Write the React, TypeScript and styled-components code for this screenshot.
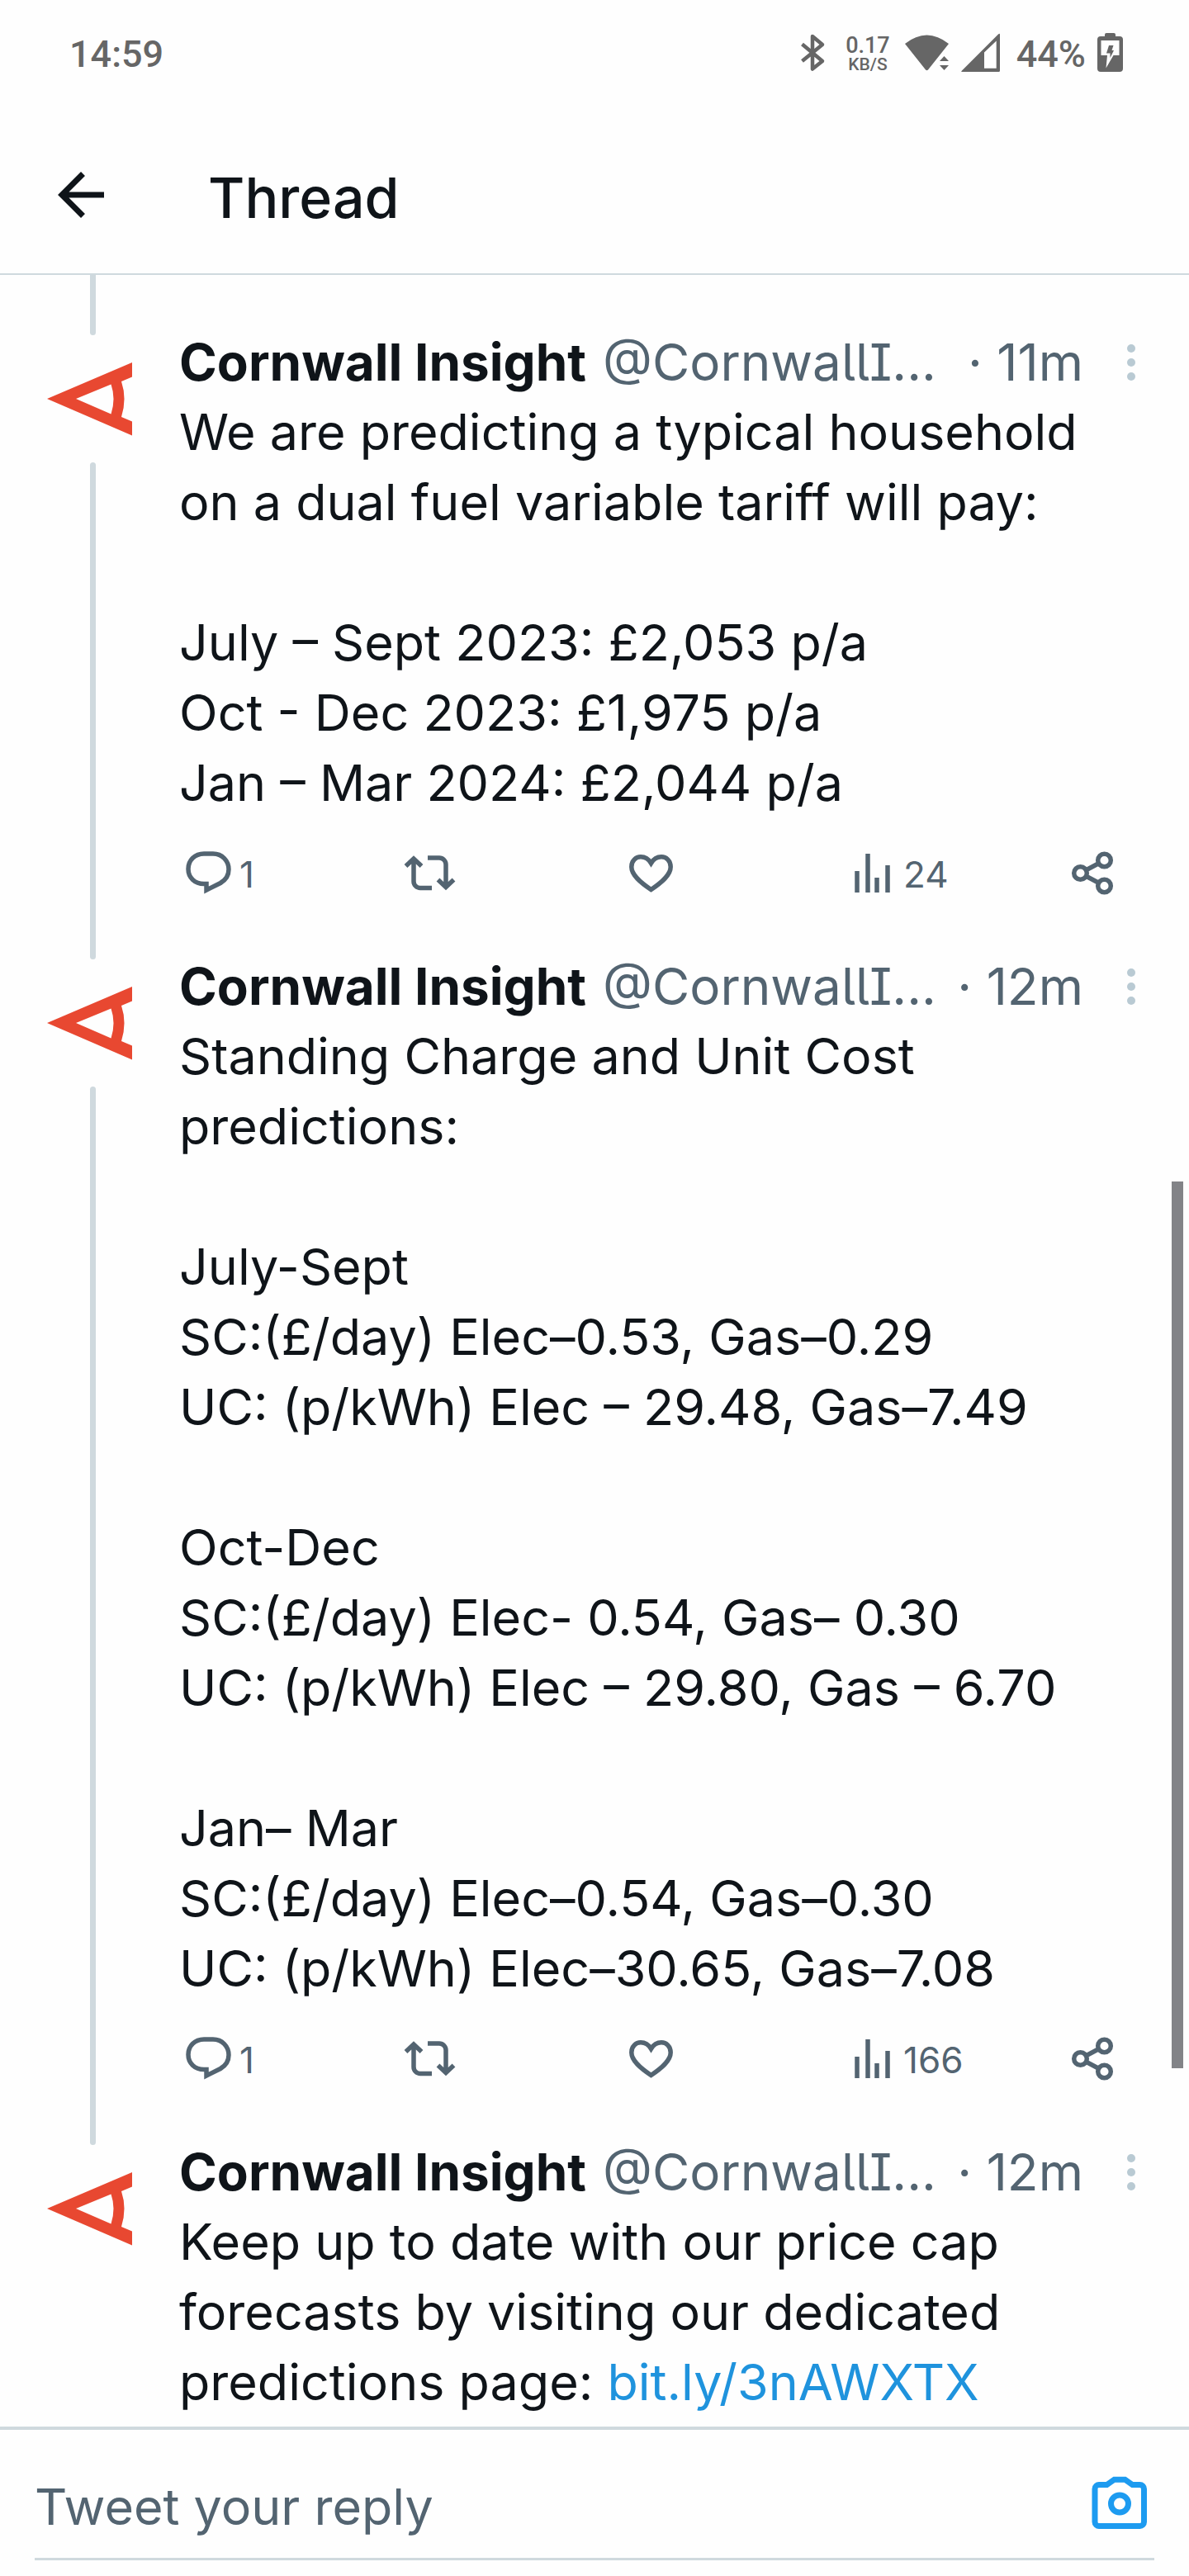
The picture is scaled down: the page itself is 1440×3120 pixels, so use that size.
import React from "react";
import styled, { createGlobalStyle } from "styled-components";

const ink = "#0f1419";
const muted = "#536471";
const line = "#cfd9de";
const status = "#666666";

const GlobalStyle = createGlobalStyle`
  * { box-sizing: border-box; }
  body {
    margin: 0;
    background: #fefefe;
    color: ${ink};
    font-family: Inter, "Noto Sans", sans-serif;
  }
  button, input { font: inherit; }
`;

const Screen = styled.div`
  display: flex;
  flex-direction: column;
  min-height: 100vh;
`;

const StatusBar = styled.div`
  display: flex;
  align-items: center;
  justify-content: space-between;
  height: 132px;
  padding: 0 80px 0 84px;
  color: ${status};
  font: 500 45px/52px Roboto, sans-serif;
`;

const StatusIcons = styled.div`
  display: flex;
  align-items: center;
`;

const StatusIcon = styled.svg<{ $gap: number }>`
  display: block;
  height: 52px;
  margin-left: ${(p) => p.$gap}px;
  fill: currentColor;
  overflow: visible;
`;

const Speed = styled.div`
  display: flex;
  flex-direction: column;
  align-items: center;
  margin-left: 26px;
  font-size: 27px;
  line-height: 24px;
`;

const SpeedUnit = styled.span`
  font-size: 21px;
  line-height: 22px;
`;

const BatteryLevel = styled.span`
  margin-left: 20px;
`;

const TopBar = styled.header`
  display: flex;
  align-items: center;
  gap: 124px;
  height: 201px;
  padding: 8px 68px 0;
  border-bottom: 2px solid ${line};
`;

const IconButton = styled.button`
  display: flex;
  flex: none;
  align-items: center;
  justify-content: center;
  padding: 0;
  border: 0;
  background: none;
  color: inherit;
  cursor: pointer;
`;

const Title = styled.h1`
  margin: 0;
  padding-top: 6px;
  font-size: 68px;
  font-weight: 500;
  line-height: 84px;
`;

const Feed = styled.main`
  position: relative;
  flex: 1;
  padding-bottom: 11px;
`;

const ScrollThumb = styled.div`
  position: absolute;
  top: 1098px;
  right: 7px;
  width: 14px;
  height: 1074px;
  background: #828387;
`;

const Post = styled.article`
  display: grid;
  grid-template-columns: 140px minmax(0, 1fr);
  column-gap: 35px;
  padding: 0 12px 0 42px;
`;

const Rail = styled.div`
  display: flex;
  flex-direction: column;
  align-items: center;
  gap: 7px;
`;

const ThreadStart = styled.div`
  width: 7px;
  height: 73px;
  border-radius: 0 0 4px 4px;
  background: ${line};
`;

const ThreadEnd = styled.div`
  flex: 1;
  width: 7px;
  border-radius: 4px 4px 0 0;
  background: ${line};
`;

const Avatar = styled.svg`
  display: block;
  width: 140px;
  height: 140px;
  fill: #e84831;
`;

const PostMain = styled.div`
  padding-top: 63px;
`;

const PostHeader = styled.div`
  display: flex;
  align-items: center;
  font-size: 62px;
  line-height: 85px;
  white-space: nowrap;
`;

const Name = styled.strong`
  font-weight: 700;
`;

const Handle = styled.span`
  flex: 1;
  min-width: 0;
  margin-left: 20px;
  color: ${muted};
  font-feature-settings: "cv05", "cv08";
`;

const Time = styled.time`
  color: ${muted};
`;

const MoreButton = styled(IconButton)`
  width: 116px;
  height: 85px;
  color: #b9cad3;
`;

const PostText = styled.p`
  margin: 0 114px 0 0;
  font-size: 61px;
  line-height: 85px;
  white-space: pre-wrap;
`;

const Link = styled.a`
  color: #1f93dd;
  text-decoration: none;
`;

const Actions = styled.div`
  display: grid;
  grid-template-columns: repeat(4, 1fr) 60px;
  padding: 36px 74px 2px 5px;
  color: ${muted};
`;

const ActionButton = styled(IconButton)`
  justify-content: flex-start;
  gap: 8px;
  height: 60px;
`;

const ActionIcon = styled.svg`
  display: block;
  flex: none;
  width: 60px;
  height: 60px;
  fill: none;
  stroke: currentColor;
  stroke-width: 5.5;
  overflow: visible;
`;

const Count = styled.span`
  padding-top: 4px;
  font-size: 44px;
  line-height: 54px;
`;

const ReplyBar = styled.form`
  padding: 0 42px 19px;
  border-top: 4px solid ${line};
`;

const ReplyField = styled.div`
  display: flex;
  align-items: center;
  height: 158px;
  padding: 30px 6px 0 0;
  border-bottom: 3px solid ${line};
`;

const ReplyInput = styled.input`
  flex: 1;
  min-width: 0;
  height: 85px;
  padding: 0;
  border: 0;
  outline: 0;
  background: none;
  color: ${ink};
  font-size: 61px;
  &::placeholder {
    color: ${muted};
    opacity: 1;
  }
`;

const CameraButton = styled(IconButton)`
  padding-bottom: 8px;
  color: #1d9bf0;
`;

type Thread = {
  time: string;
  text: React.ReactNode;
  views?: number;
};

const posts: Thread[] = [
  {
    time: "11m",
    views: 24,
    text: `We are predicting a typical household on a dual fuel variable tariff will pay:

July – Sept 2023: £2,053 p/a
Oct - Dec 2023: £1,975 p/a
Jan – Mar 2024: £2,044 p/a`,
  },
  {
    time: "12m",
    views: 166,
    text: `Standing Charge and Unit Cost predictions:

July-Sept
SC:(£/day) Elec–0.53, Gas–0.29
UC: (p/kWh) Elec – 29.48, Gas–7.49

Oct-Dec
SC:(£/day) Elec- 0.54, Gas– 0.30
UC: (p/kWh) Elec – 29.80, Gas – 6.70

Jan– Mar
SC:(£/day) Elec–0.54, Gas–0.30
UC: (p/kWh) Elec–30.65, Gas–7.08`,
  },
  {
    time: "12m",
    text: (
      <>
        <span>Keep up to date with our price cap forecasts by visiting our dedicated </span>
        <span>predictions page: </span>
        <Link href="https://bit.ly/3nAWXTX">bit.ly/3nAWXTX</Link>
      </>
    ),
  },
];

function PostActions({ views }: { views: number }) {
  return (
    <Actions>
      <ActionButton type="button" aria-label="Reply">
        <ActionIcon viewBox="0 0 60 60">
          <path d="M25 7H36C47 7 55 15.5 55 26C55 33 51 39 45 42.5L28 51V43.5H25C14 43.5 6 36 6 25.5S14 7 25 7Z" />
        </ActionIcon>
        <Count>1</Count>
      </ActionButton>
      <ActionButton type="button" aria-label="Retweet">
        <ActionIcon viewBox="0 0 60 60">
          <path d="M11 13V40.5a8 8 0 0 0 8 8H33M1.5 22L11 13L20.5 22M28 12H42a8 8 0 0 1 8 8V48M40.5 38.5L50 47.5L59.5 38.5" />
        </ActionIcon>
      </ActionButton>
      <ActionButton type="button" aria-label="Like">
        <ActionIcon viewBox="0 0 60 60">
          <path d="M30.5 50.5C18 42 6.8 33 6.8 23C6.8 15.5 12 10.8 18 10.8C23.5 10.8 27.5 13.5 30.5 18.5C33.5 13.5 37.5 10.8 43 10.8C49 10.8 54.2 15.5 54.2 23C54.2 33 43 42 30.5 50.5Z" />
        </ActionIcon>
      </ActionButton>
      <ActionButton type="button" aria-label="Views">
        <ActionIcon viewBox="0 0 60 60">
          <path d="M12 28V54M25 7V54M36 36V54M49 21V54" />
        </ActionIcon>
        <Count>{views}</Count>
      </ActionButton>
      <ActionButton type="button" aria-label="Share">
        <ActionIcon viewBox="0 0 60 60">
          <circle cx="14.5" cy="30.5" r="7.8" />
          <circle cx="43.5" cy="15" r="7.8" />
          <circle cx="43.5" cy="46" r="7.8" />
          <path d="M21 27L37 18.5M21 34L37 42.5" />
        </ActionIcon>
      </ActionButton>
    </Actions>
  );
}

function ThreadPost({ post }: { post: Thread }) {
  return (
    <Post>
      <Rail>
        <ThreadStart />
        <Avatar viewBox="0 0 140 140" role="img" aria-label="Cornwall Insight">
          <path
            fillRule="evenodd"
            d="M15 70L118 26V43.5L105 49Q112 70 105 92L118 97.5V114.5ZM50 70L92.5 88.5Q98.5 70 92.5 52.5Z"
          />
        </Avatar>
        {post.views !== undefined && <ThreadEnd />}
      </Rail>
      <PostMain>
        <PostHeader>
          <Name>Cornwall Insight</Name>
          <Handle>@CornwallI...</Handle>
          <Time>· {post.time}</Time>
          <MoreButton type="button" aria-label="More">
            <svg width="12" height="44" viewBox="0 0 12 44" fill="currentColor">
              <circle cx="6" cy="5" r="5" />
              <circle cx="6" cy="22" r="5" />
              <circle cx="6" cy="39" r="5" />
            </svg>
          </MoreButton>
        </PostHeader>
        <PostText>{post.text}</PostText>
        {post.views !== undefined && <PostActions views={post.views} />}
      </PostMain>
    </Post>
  );
}

export default function App() {
  return (
    <Screen>
      <GlobalStyle />
      <StatusBar>
        <span>14:59</span>
        <StatusIcons>
          <StatusIcon $gap={0} width="28" viewBox="0 0 28 52">
            <path
              d="M1.5 13.5L26 34L14 43.5V4L26 14L1.5 34"
              fill="none"
              stroke="currentColor"
              strokeWidth="4.5"
              strokeLinejoin="round"
            />
          </StatusIcon>
          <Speed>
            0.17
            <SpeedUnit>KB/S</SpeedUnit>
          </Speed>
          <StatusIcon $gap={18} width="54" viewBox="0 0 54 52">
            <path d="M0 13Q26.5 -8 53 13L28 44.5Q26.5 46 25 44.5ZM42 34L47.5 28L53 34ZM42 39H53L47.5 45Z" />
          </StatusIcon>
          <StatusIcon $gap={14} width="47" viewBox="0 0 47 52">
            <path
              fillRule="evenodd"
              d="M1 45.5L45 1.5Q47 0 47 2V45.5Q47 47 45.5 47H1Q-0.5 47 1 45.5ZM28 23.5V42.7H42.7V9.5Z"
            />
          </StatusIcon>
          <BatteryLevel>44%</BatteryLevel>
          <StatusIcon $gap={14} width="31" viewBox="0 0 31 52">
            <path
              fillRule="evenodd"
              d="M9 4V2Q9 0 11 0H20Q22 0 22 2V4H27Q31 4 31 8V43Q31 47 27 47H4Q0 47 0 43V8Q0 4 4 4ZM4.5 9V27H12L10.5 42.5L19.5 27H26.5V9Z"
            />
            <path d="M14 15H19.5L17.5 21H20L15.5 30V24.5H11Z" />
          </StatusIcon>
        </StatusIcons>
      </StatusBar>
      <TopBar>
        <IconButton type="button" aria-label="Back">
          <svg width="60" height="60" viewBox="0 0 60 60" fill="none" stroke="currentColor" strokeWidth="7">
            <path d="M58 30H8M32.5 4.5L7 30L32.5 55.5" />
          </svg>
        </IconButton>
        <Title>Thread</Title>
      </TopBar>
      <Feed>
        {posts.map((post, i) => (
          <ThreadPost key={i} post={post} />
        ))}
        <ScrollThumb />
      </Feed>
      <ReplyBar>
        <ReplyField>
          <ReplyInput type="text" aria-label="Tweet your reply" placeholder="Tweet your reply" />
          <CameraButton type="button" aria-label="Add photo">
            <svg width="72" height="72" viewBox="0 0 72 72" fill="none" stroke="currentColor" strokeWidth="7">
              <path d="M11.5 13.5H20.5L29.5 7.2H42.5L51.5 13.5H60.5A5 5 0 0 1 65.5 18.5V58.5A5 5 0 0 1 60.5 63.5H11.5A5 5 0 0 1 6 58.5V18.5A5 5 0 0 1 11.5 13.5Z" />
              <circle cx="36" cy="36.5" r="10.5" />
            </svg>
          </CameraButton>
        </ReplyField>
      </ReplyBar>
    </Screen>
  );
}
